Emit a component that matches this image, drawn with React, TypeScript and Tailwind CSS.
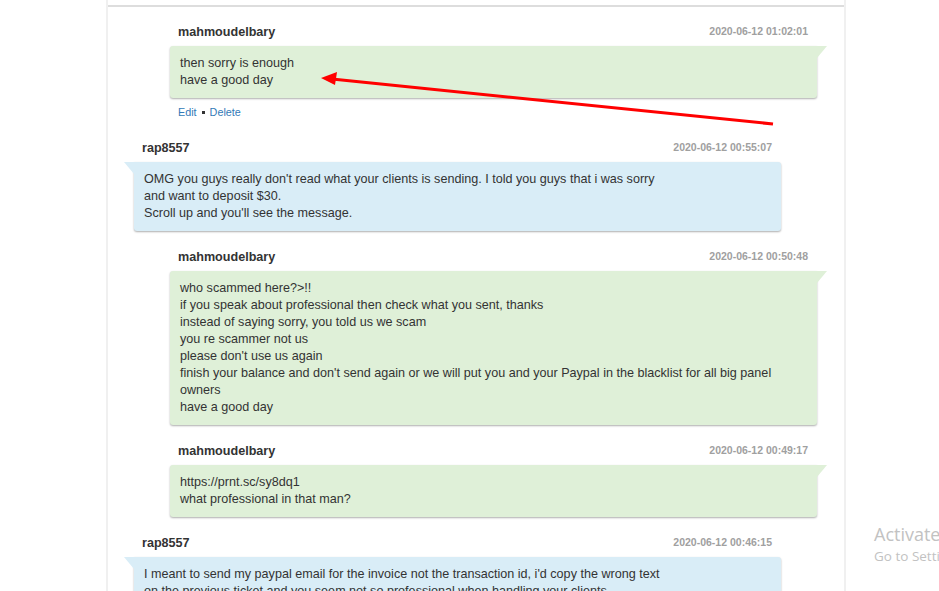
import React from 'react'

type Msg = {
  author: string
  date: string
  body: string
  staff: boolean
  editable?: boolean
}

const messages: Msg[] = [
  {
    author: 'mahmoudelbary',
    date: '2020-06-12 01:02:01',
    body: 'then sorry is enough\nhave a good day',
    staff: true,
    editable: true,
  },
  {
    author: 'rap8557',
    date: '2020-06-12 00:55:07',
    body: "OMG you guys really don't read what your clients is sending. I told you guys that i was sorry\nand want to deposit $30.\nScroll up and you'll see the message.",
    staff: false,
  },
  {
    author: 'mahmoudelbary',
    date: '2020-06-12 00:50:48',
    body: "who scammed here?>!!\nif you speak about professional then check what you sent, thanks\ninstead of saying sorry, you told us we scam\nyou re scammer not us\nplease don't use us again\nfinish your balance and don't send again or we will put you and your Paypal in the blacklist for all big panel owners\nhave a good day",
    staff: true,
  },
  {
    author: 'mahmoudelbary',
    date: '2020-06-12 00:49:17',
    body: 'https://prnt.sc/sy8dq1\nwhat professional in that man?',
    staff: true,
  },
  {
    author: 'rap8557',
    date: '2020-06-12 00:46:15',
    body: "I meant to send my paypal email for the invoice not the transaction id, i'd copy the wrong text\non the previous ticket and you seem not so professional when handling your clients\nplease check again",
    staff: false,
  },
]

function Message({ m }: { m: Msg }) {
  return (
    <div className={m.staff ? 'ml-9' : 'mr-9'}>
      <div className="flex h-5 items-center justify-between px-2">
        <span className="text-[12.6px] font-bold text-[#333]">{m.author}</span>
        <span className="pr-px text-[10.5px] font-bold text-[#a0a0a0]">{m.date}</span>
      </div>
      <div
        className={`relative mt-1 rounded-[3px] px-[10px] py-[9px] text-[12.6px] leading-[17px] whitespace-pre-line text-[#333] shadow-[0_1px_2px_rgba(0,0,0,0.32)] ${
          m.staff ? 'rounded-tr-none bg-[#dff0d8]' : 'rounded-tl-none bg-[#d9edf7]'
        }`}
      >
        {m.staff ? (
          <span className="absolute top-0 right-[-10px] h-0 w-0 border-t-[12px] border-r-[10px] border-t-[#dff0d8] border-r-transparent" />
        ) : (
          <span className="absolute top-0 left-[-10px] h-0 w-0 border-t-[12px] border-l-[10px] border-t-[#d9edf7] border-l-transparent" />
        )}
        {m.body}
      </div>
      {m.editable ? (
        <div className="mt-[7px] flex h-[14px] items-center gap-1 px-2 text-[10.8px] text-[#337ab7]">
          <span>Edit</span>
          <span className="mx-px h-[3px] w-[3px] bg-[#333]" />
          <span>Delete</span>
        </div>
      ) : null}
      <div className={m.editable ? 'h-[19px]' : 'h-4'} />
    </div>
  )
}

export default function App() {
  return (
    <div className="relative h-[591px] w-[939px] overflow-hidden bg-white font-['Liberation_Sans',Arial,sans-serif]">
      <div className="ml-[106px] h-full w-[740px] border-x-2 border-[#f0f0f0] pt-[5px]">
        <div className="h-[2px] bg-[#dddddd]" />
        <div className="pt-[15px] pr-[27px] pl-[26px]">
          {messages.map((m, i) => (
            <Message key={i} m={m} />
          ))}
        </div>
      </div>

      {/* red annotation arrow */}
      <svg className="pointer-events-none absolute inset-0" width="939" height="591">
        <line x1="773" y1="124" x2="332" y2="79" stroke="#ff0000" strokeWidth="3" />
        <polygon points="321,78 337,72 335,85" fill="#ff0000" />
      </svg>

      <div className="pointer-events-none absolute top-[522px] left-[874px] font-['Open_Sans','Noto_Sans',sans-serif] whitespace-nowrap text-[#c2c2c2]">
        <div className="text-[18px] leading-[24px]">Activate Windows</div>
        <div className="text-[13.5px] leading-[20px]">Go to Settings to activate Windows.</div>
      </div>
    </div>
  )
}
